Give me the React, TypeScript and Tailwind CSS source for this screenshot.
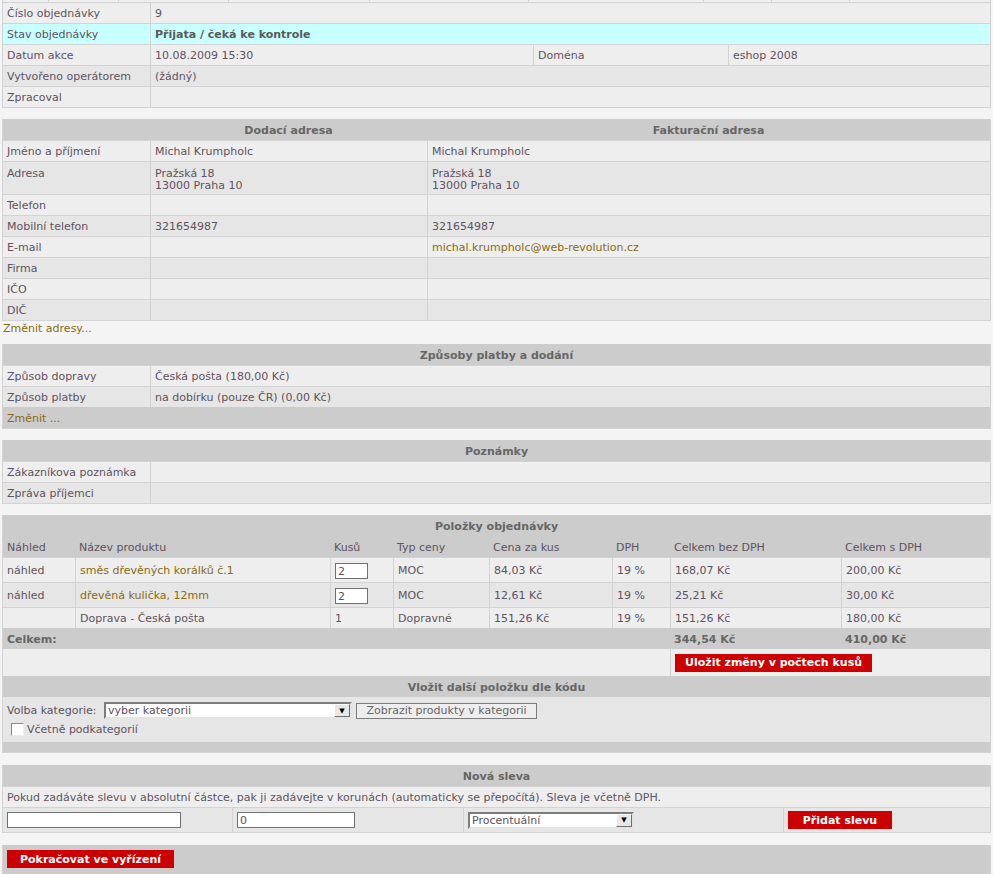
import type { ReactNode } from "react";

type RowProps = {
  h?: string;
  bg?: string;
  children?: ReactNode;
};

type CellProps = {
  w?: string;
  first?: boolean;
  className?: string;
  children?: ReactNode;
};

function Row({ h = "h-[21px]", bg = "bg-[#eeeeee]", children }: RowProps) {
  return <div className={`flex ${h} ${bg} border-t border-[#d3d3d3]`}>{children}</div>;
}

function Cell({ w = "flex-1", first = false, className = "items-center pt-[2px]", children }: CellProps) {
  return (
    <div className={`flex ${w} px-1 ${first ? "" : "border-l border-[#d3d3d3]"} ${className}`}>
      {children}
    </div>
  );
}

function Head({ children }: { children?: ReactNode }) {
  return (
    <div className="flex h-[21px] items-center justify-center bg-[#cccccc] pt-[2px] font-bold text-[#666666]">
      {children}
    </div>
  );
}

function Link({ children }: { children: ReactNode }) {
  return <span className="text-[#8a6a10]">{children}</span>;
}

function RedButton({ w, children }: { w: string; children: ReactNode }) {
  return (
    <div className={`flex h-[18px] ${w} items-center justify-center bg-[#cc0000] pt-px font-bold text-white`}>
      {children}
    </div>
  );
}

function FakeSelect({ w, value }: { w: string; value: string }) {
  return (
    <div className={`flex h-[17px] ${w} shrink-0 border-2 border-t-[#7c7c7c] border-l-[#7c7c7c] border-r-[#e4e4e4] border-b-[#e4e4e4] bg-white`}>
      <span className="flex-1 truncate pl-[2px] leading-[13px]">{value}</span>
      <span className="flex w-[16px] items-center justify-center border border-t-white border-l-white border-r-[#6f6f6f] border-b-[#6f6f6f] bg-[#e8e8e8] text-[7px] text-black">
        ▼
      </span>
    </div>
  );
}

function TextInput({ w, value }: { w: string; value: string }) {
  return (
    <input
      readOnly
      value={value}
      className={`h-[16px] ${w} border border-[#707070] bg-white px-[2px] text-[11px] text-[#5e5260] outline-none`}
    />
  );
}

const addressRows = [
  { label: "Jméno a příjmení", a: "Michal Krumpholc", b: "Michal Krumpholc" },
  { label: "Adresa", a: "Pražská 18\n13000 Praha 10", b: "Pražská 18\n13000 Praha 10" },
  { label: "Telefon", a: "", b: "" },
  { label: "Mobilní telefon", a: "321654987", b: "321654987" },
  { label: "E-mail", a: "", b: "michal.krumpholc@web-revolution.cz" },
  { label: "Firma", a: "", b: "" },
  { label: "IČO", a: "", b: "" },
  { label: "DIČ", a: "", b: "" },
];

const items = [
  { preview: "náhled", name: "směs dřevěných korálků č.1", link: true, qty: "2", input: true, type: "MOC", price: "84,03 Kč", vat: "19 %", net: "168,07 Kč", gross: "200,00 Kč" },
  { preview: "náhled", name: "dřevěná kulička, 12mm", link: true, qty: "2", input: true, type: "MOC", price: "12,61 Kč", vat: "19 %", net: "25,21 Kč", gross: "30,00 Kč" },
  { preview: "", name: "Doprava - Česká pošta", link: false, qty: "1", input: false, type: "Dopravné", price: "151,26 Kč", vat: "19 %", net: "151,26 Kč", gross: "180,00 Kč" },
];

const topTicks = ["w-[46px]", "w-[70px]", "w-[110px]", "w-[141px]", "w-[159px]", "w-[175px]", "w-[68px]", "w-[78px]"];

export default function App() {
  return (
    <div className="min-h-screen bg-[#f4f4f4] font-['DejaVu_Sans',Verdana,sans-serif] text-[11px] leading-[12px] text-[#5e5260]">
      <div className="mx-[2px] flex h-[2px] border-x border-[#d3d3d3] bg-[#eeeeee]">
        {topTicks.map((w, i) => (
          <div key={i} className={`${w} shrink-0 border-r border-[#d3d3d3]`} />
        ))}
      </div>

      {/* order info */}
      <section className="mx-[2px] border-x border-b border-[#d3d3d3]">
        <Row>
          <Cell first w="w-[147px] shrink-0">Číslo objednávky</Cell>
          <Cell>9</Cell>
        </Row>
        <Row bg="bg-[#c8ffff]">
          <Cell first w="w-[147px] shrink-0">Stav objednávky</Cell>
          <Cell className="items-center pt-[2px] font-bold text-[#5a5a5a]">Přijata / čeká ke kontrole</Cell>
        </Row>
        <Row>
          <Cell first w="w-[147px] shrink-0">Datum akce</Cell>
          <Cell w="w-[383px] shrink-0">10.08.2009 15:30</Cell>
          <Cell w="w-[195px] shrink-0">Doména</Cell>
          <Cell>eshop 2008</Cell>
        </Row>
        <Row bg="bg-[#e6e6e6]">
          <Cell first w="w-[147px] shrink-0">Vytvořeno operátorem</Cell>
          <Cell>(žádný)</Cell>
        </Row>
        <Row>
          <Cell first w="w-[147px] shrink-0">Zpracoval</Cell>
          <Cell />
        </Row>
      </section>

      {/* addresses */}
      <section className="mx-[2px] mt-[11px] border-x border-b border-[#d3d3d3]">
        <div className="flex h-[21px] bg-[#cccccc] pt-[2px] font-bold text-[#666666]">
          <div className="w-[147px] shrink-0" />
          <div className="flex w-[277px] shrink-0 items-center justify-center">Dodací adresa</div>
          <div className="flex flex-1 items-center justify-center">Fakturační adresa</div>
        </div>
        {addressRows.map((r, i) => {
          const multi = r.a.includes("\n");
          const h = multi ? "h-[33px]" : "h-[21px]";
          const align = multi ? "items-start pt-[6px] whitespace-pre-line" : "items-center pt-[2px]";
          return (
            <Row key={r.label} h={h} bg={i % 2 === 0 ? "bg-[#eeeeee]" : "bg-[#e6e6e6]"}>
              <Cell first w="w-[147px] shrink-0" className={align}>{r.label}</Cell>
              <Cell w="w-[277px] shrink-0" className={align}>{r.a}</Cell>
              <Cell className={align}>{r.label === "E-mail" ? <Link>{r.b}</Link> : r.b}</Cell>
            </Row>
          );
        })}
      </section>
      <div className="flex h-[14px] items-center pl-[3px] pt-[2px]">
        <Link>Změnit adresy...</Link>
      </div>

      {/* payment + shipping */}
      <section className="mx-[2px] mt-[9px] border-x border-b border-[#d3d3d3]">
        <Head>Způsoby platby a dodání</Head>
        <Row>
          <Cell first w="w-[147px] shrink-0">Způsob dopravy</Cell>
          <Cell>Česká pošta (180,00 Kč)</Cell>
        </Row>
        <Row bg="bg-[#e6e6e6]">
          <Cell first w="w-[147px] shrink-0">Způsob platby</Cell>
          <Cell>na dobírku (pouze ČR) (0,00 Kč)</Cell>
        </Row>
        <div className="flex h-[21px] items-center bg-[#cccccc] px-1 pt-[2px]">
          <Link>Změnit ...</Link>
        </div>
      </section>

      {/* notes */}
      <section className="mx-[2px] mt-[11px] border-x border-b border-[#d3d3d3]">
        <Head>Poznámky</Head>
        <Row>
          <Cell first w="w-[147px] shrink-0">Zákazníkova poznámka</Cell>
          <Cell />
        </Row>
        <Row bg="bg-[#e6e6e6]">
          <Cell first w="w-[147px] shrink-0">Zpráva příjemci</Cell>
          <Cell />
        </Row>
      </section>

      {/* order items */}
      <section className="mx-[2px] mt-[11px] border-x border-b border-[#d3d3d3]">
        <Head>Položky objednávky</Head>
        <div className="flex h-[21px] items-center bg-[#cccccc] pt-[2px]">
          <div className="w-[72px] shrink-0 px-1">Náhled</div>
          <div className="w-[255px] shrink-0 px-1">Název produktu</div>
          <div className="w-[63px] shrink-0 px-1">Kusů</div>
          <div className="w-[96px] shrink-0 px-1">Typ ceny</div>
          <div className="w-[123px] shrink-0 px-1">Cena za kus</div>
          <div className="w-[58px] shrink-0 px-1">DPH</div>
          <div className="w-[171px] shrink-0 px-1">Celkem bez DPH</div>
          <div className="flex-1 px-1">Celkem s DPH</div>
        </div>
        {items.map((it, i) => (
          <Row key={it.name} h={it.input ? "h-[25px]" : "h-[21px]"} bg={i % 2 === 0 ? "bg-[#eeeeee]" : "bg-[#e6e6e6]"}>
            <Cell first w="w-[72px] shrink-0">{it.preview}</Cell>
            <Cell w="w-[255px] shrink-0">{it.link ? <Link>{it.name}</Link> : it.name}</Cell>
            <Cell w="w-[63px] shrink-0">
              {it.input ? <TextInput w="w-[33px]" value={it.qty} /> : it.qty}
            </Cell>
            <Cell w="w-[96px] shrink-0">{it.type}</Cell>
            <Cell w="w-[123px] shrink-0">{it.price}</Cell>
            <Cell w="w-[58px] shrink-0">{it.vat}</Cell>
            <Cell w="w-[171px] shrink-0">{it.net}</Cell>
            <Cell>{it.gross}</Cell>
          </Row>
        ))}
        <div className="flex h-[21px] items-center bg-[#cccccc] pt-[2px] font-bold text-[#666666]">
          <div className="w-[667px] shrink-0 px-1">Celkem:</div>
          <div className="w-[171px] shrink-0 px-1">344,54 Kč</div>
          <div className="flex-1 px-1">410,00 Kč</div>
        </div>
        <div className="flex h-[27px] bg-[#eeeeee]">
          <div className="w-[667px] shrink-0" />
          <div className="flex flex-1 items-center border-l border-[#d3d3d3] px-1">
            <RedButton w="w-[197px]">Uložit změny v počtech kusů</RedButton>
          </div>
        </div>
        <Head>Vložit další položku dle kódu</Head>
        <div className="flex h-[45px] flex-col bg-[#e6e6e6] px-1 pt-[5px]">
          <div className="flex items-center">
            <span className="w-[97px] shrink-0 pt-px">Volba kategorie:</span>
            <FakeSelect w="w-[248px]" value="vyber kategorii" />
            <div className="ml-[4px] flex h-[16px] w-[181px] shrink-0 items-center justify-center border border-[#7c7c7c] bg-[#eeeeee] pt-px text-[#666666]">
              Zobrazit produkty v kategorii
            </div>
          </div>
          <div className="mt-[4px] flex items-center gap-[3px] pl-[4px]">
            <span className="h-[13px] w-[13px] border border-t-[#8a8a8a] border-l-[#8a8a8a] border-r-[#eeeeee] border-b-[#eeeeee] bg-white" />
            <span className="pt-px">Včetně podkategorií</span>
          </div>
        </div>
        <div className="h-[10px] bg-[#cccccc]" />
      </section>

      {/* discount */}
      <section className="mx-[2px] mt-[12px] border-x border-b border-[#d3d3d3]">
        <Head>Nová sleva</Head>
        <Row>
          <Cell first>
            Pokud zadáváte slevu v absolutní částce, pak ji zadávejte v korunách (automaticky se přepočítá). Sleva je včetně DPH.
          </Cell>
        </Row>
        <Row h="h-[25px]" bg="bg-[#e6e6e6]">
          <Cell first w="w-[229px] shrink-0" className="items-center">
            <TextInput w="w-[174px]" value="" />
          </Cell>
          <Cell w="w-[231px] shrink-0" className="items-center">
            <TextInput w="w-[118px]" value="0" />
          </Cell>
          <Cell w="w-[320px] shrink-0" className="items-center">
            <FakeSelect w="w-[166px]" value="Procentuální" />
          </Cell>
          <Cell className="items-center">
            <RedButton w="w-[104px]">Přidat slevu</RedButton>
          </Cell>
        </Row>
      </section>

      <div className="mx-[2px] mt-[12px] flex h-[30px] items-start border-x border-[#d3d3d3] bg-[#cccccc] px-1 pt-[5px]">
        <RedButton w="w-[167px]">Pokračovat ve vyřízení</RedButton>
      </div>
    </div>
  );
}
